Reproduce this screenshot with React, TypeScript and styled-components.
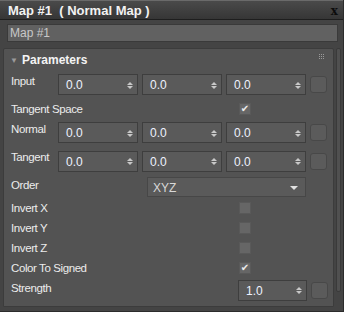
import React from 'react'
import styled, { createGlobalStyle } from 'styled-components'

const Global = createGlobalStyle`
  html, body {
    margin: 0;
    padding: 0;
    background: #444444;
  }
  body {
    font-family: "Liberation Sans", Arial, sans-serif;
    font-size: 11px;
    color: #e6e6e6;
  }
`

const Window = styled.div`
  width: 344px;
  height: 312px;
  box-sizing: border-box;
  background: #444444;
  border-right: 1px solid #2c2c2c;
  border-bottom: 1px solid #2c2c2c;
  display: flex;
  flex-direction: column;
  overflow: hidden;
`

const TitleBar = styled.div`
  height: 20px;
  flex: none;
  display: flex;
  align-items: center;
  justify-content: space-between;
  padding: 0 5px 0 8px;
  background: linear-gradient(#4a4a4a, #363636);
  border-top: 1px solid #6a6a6a;
  border-bottom: 1px solid #1e1e1e;
  box-sizing: border-box;
`

const Title = styled.span`
  font-size: 13px;
  font-weight: bold;
  color: #f2f2f2;
  white-space: pre;
`

const Close = styled.span`
  font-size: 12px;
  font-weight: bold;
  color: #0c0c0c;
  font-family: "DejaVu Serif", serif;
  line-height: 1;
  margin-top: 1px;
`

const NameField = styled.div`
  margin: 4px 5px 0 7px;
  height: 18px;
  box-sizing: border-box;
  background: #616161;
  border: 1px solid #3a3a3a;
  color: #c8c8c8;
  font-size: 12px;
  padding-left: 2px;
  display: flex;
  align-items: center;
  flex: none;
`

const Body = styled.div`
  display: flex;
  margin: 6px 0 0 3px;
  gap: 2px;
  align-items: flex-start;
`

const Panel = styled.div`
  width: 331px;
  box-sizing: border-box;
  background: #535353;
  border: 1px solid #3c3c3c;
  border-radius: 2px 2px 0 0;
  padding-bottom: 4px;
`

const ScrollTrack = styled.div`
  width: 5px;
  height: 244px;
  box-sizing: border-box;
  background: #505050;
  border: 1px solid #3a3a3a;
  border-radius: 2px;
`

const Header = styled.div`
  height: 21px;
  display: flex;
  align-items: center;
  padding: 0 9px 0 6px;
`

const Arrow = styled.span`
  font-size: 8px;
  color: #9a9a9a;
  width: 12px;
  margin-top: 1px;
`

const HeaderTitle = styled.span`
  flex: 1;
  font-size: 12px;
  font-weight: bold;
  color: #f4f4f4;
`

const Grip = styled.div`
  display: grid;
  grid-template-columns: repeat(3, 1px);
  gap: 1px;
  margin-top: -6px;
  span {
    width: 1px;
    height: 1px;
    background: #9a9a9a;
  }
`

const Row = styled.div<{ $h: number }>`
  height: ${(p) => p.$h}px;
  display: flex;
  align-items: center;
  padding-left: 7px;
`

const Label = styled.span<{ $w: number; $raise?: number }>`
  width: ${(p) => p.$w}px;
  flex: none;
  color: #ececec;
  font-size: 11.5px;
  white-space: nowrap;
  letter-spacing: -0.4px;
  transform: translateY(${(p) => -(p.$raise || 0)}px);
`

const Fields = styled.div`
  display: flex;
  gap: 4px;
  align-items: center;
`

const Spinner = styled.div<{ $w?: number }>`
  width: ${(p) => p.$w || 80}px;
  height: 21px;
  box-sizing: border-box;
  background: #5a5a5a;
  border: 1px solid #3e3e3e;
  display: flex;
  align-items: center;
  justify-content: space-between;
  padding: 1px 4px 0 7px;
  font-size: 12px;
  color: #eef2ff;
`

const Arrows = styled.span`
  display: flex;
  flex-direction: column;
  gap: 1px;
  i {
    width: 0;
    height: 0;
    border-left: 3px solid transparent;
    border-right: 3px solid transparent;
  }
  i:first-child {
    border-bottom: 3px solid #c8c8c8;
  }
  i:last-child {
    border-top: 3px solid #c8c8c8;
  }
`

const MapButton = styled.div`
  width: 17px;
  height: 17px;
  box-sizing: border-box;
  background: #5b5b5b;
  border: 1px solid #484848;
  border-radius: 3px;
`

const Check = styled.div`
  width: 12px;
  height: 12px;
  box-sizing: border-box;
  background: #666666;
  border: 1px solid #595959;
  display: flex;
  align-items: center;
  justify-content: center;
  font-family: "DejaVu Sans", sans-serif;
  font-size: 10px;
  line-height: 1;
  color: #ececec;
`

const Dropdown = styled.div`
  width: 159px;
  height: 20px;
  box-sizing: border-box;
  background: #5a5a5a;
  border: 1px solid #474747;
  display: flex;
  align-items: center;
  justify-content: space-between;
  padding: 1px 7px 0 5px;
  font-size: 12px;
  color: #d8d8d8;
  i {
    width: 0;
    height: 0;
    border-left: 4px solid transparent;
    border-right: 4px solid transparent;
    border-top: 4px solid #e0e0e0;
  }
`

const Spin = ({ value, w }: { value: string; w?: number }) => (
  <Spinner $w={w}>
    <span>{value}</span>
    <Arrows>
      <i />
      <i />
    </Arrows>
  </Spinner>
)

const VectorRow = ({ label, h }: { label: string; h: number }) => (
  <Row $h={h}>
    <Label $w={47} $raise={4}>
      {label}
    </Label>
    <Fields>
      <Spin value="0.0" />
      <Spin value="0.0" />
      <Spin value="0.0" />
      <MapButton />
    </Fields>
  </Row>
)

const CheckRow = ({ label, checked }: { label: string; checked?: boolean }) => (
  <Row $h={20}>
    <Label $w={228}>{label}</Label>
    <Check>{checked ? '✔' : ''}</Check>
  </Row>
)

export default function App() {
  return (
    <>
      <Global />
      <Window>
        <TitleBar>
          <Title>Map #1  ( Normal Map )</Title>
          <Close>x</Close>
        </TitleBar>
        <NameField>Map #1</NameField>
        <Body>
          <Panel>
            <Header>
              <Arrow>▼</Arrow>
              <HeaderTitle>Parameters</HeaderTitle>
              <Grip>
                {Array.from({ length: 9 }).map((_, i) => (
                  <span key={i} />
                ))}
              </Grip>
            </Header>
            <VectorRow label="Input" h={29} />
            <CheckRow label="Tangent Space" checked />
            <VectorRow label="Normal" h={27} />
            <VectorRow label="Tangent" h={30} />
            <Row $h={22}>
              <Label $w={136} $raise={2}>
                Order
              </Label>
              <Dropdown>
                <span>XYZ</span>
                <i />
              </Dropdown>
            </Row>
            <CheckRow label="Invert X" />
            <CheckRow label="Invert Y" />
            <CheckRow label="Invert Z" />
            <CheckRow label="Color To Signed" checked />
            <Row $h={24}>
              <Label $w={227} $raise={2}>
                Strength
              </Label>
              <Fields>
                <Spin value="1.0" w={69} />
                <MapButton />
              </Fields>
            </Row>
          </Panel>
          <ScrollTrack />
        </Body>
      </Window>
    </>
  )
}
